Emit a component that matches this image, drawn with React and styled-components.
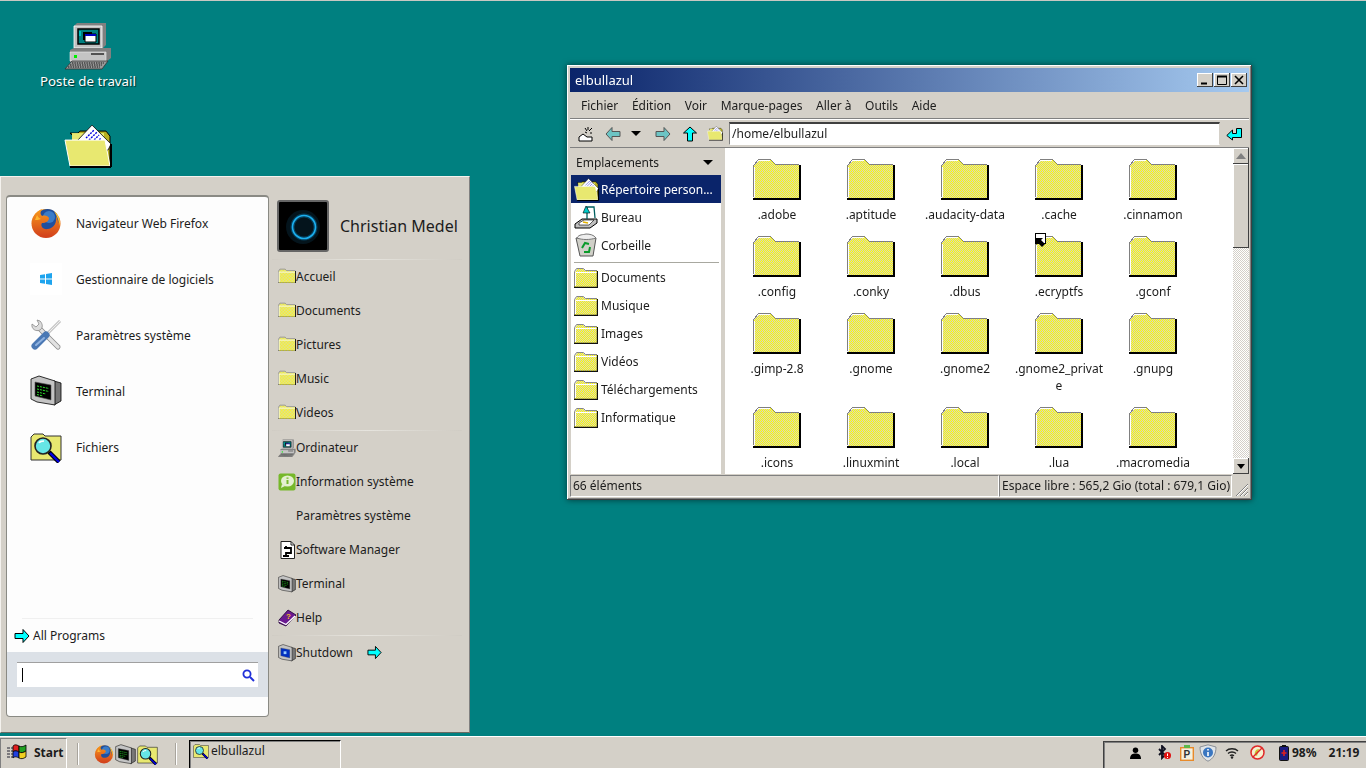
import React from 'react';
import styled, { createGlobalStyle } from 'styled-components';

const GlobalStyle = createGlobalStyle`
  html, body { margin: 0; padding: 0; height: 100%; overflow: hidden; }
  body { font-family: "Noto Sans", "DejaVu Sans", sans-serif; font-size: 12px; color: #1c1c1c; }
`;

const folders = [
  '.adobe', '.aptitude', '.audacity-data', '.cache', '.cinnamon',
  '.config', '.conky', '.dbus', '.ecryptfs', '.gconf',
  '.gimp-2.8', '.gnome', '.gnome2', '.gnome2_private', '.gnupg',
  '.icons', '.linuxmint', '.local', '.lua', '.macromedia',
];

const Patterns = () => (
  <HiddenSvg>
    <defs>
      <pattern id="dith" width="2" height="2" patternUnits="userSpaceOnUse">
        <rect width="2" height="2" fill="#ffff00" />
        <rect x="1" width="1" height="1" fill="#d4d0c8" />
        <rect y="1" width="1" height="1" fill="#d4d0c8" />
      </pattern>
      <linearGradient id="ffBody" x1="0" y1="0" x2="0" y2="1">
        <stop offset="0" stopColor="#f99b1c" />
        <stop offset="1" stopColor="#d2401c" />
      </linearGradient>
    </defs>
  </HiddenSvg>
);

const BigFolder = () => (
  <svg width="48" height="41" viewBox="0 0 48 41" shapeRendering="crispEdges">
    <path d="M1 39V6L5 2L6 1H17L22 6H47V39Z" fill="url(#dith)" />
    <path d="M.5 38V6.5L5.5 .5H17.5L22.5 5.5H46" stroke="#808080" fill="none" />
    <path d="M1.5 38V7.5M6 1.5H17" stroke="#fff" fill="none" />
    <path d="M0 39.5H48M47 6V40" stroke="#000" strokeWidth="2" fill="none" />
  </svg>
);

const SmallFolder = ({ size = 24 }) => (
  <svg width={size} height={size * 0.875} viewBox="0 0 24 21">
    <path d="M1 20V5L3 2H10L12 4H23V20Z" fill="url(#dith)" />
    <path d="M.5 20V4.5L2.5 1.5H9.5L11.5 3.5H23" stroke="#888" fill="none" />
    <path d="M1.5 19V5.5H23" stroke="#fff" fill="none" />
    <path d="M0 20.5H24M23.5 4V21" stroke="#111" strokeWidth="1.4" fill="none" />
  </svg>
);

const OpenFolder = ({ size = 48 }) => (
  <svg width={size} height={size * 0.92} viewBox="0 0 48 44">
    <path d="M6 9H14L16 7H42L46 12V42H40Z" fill="#b8b020" stroke="#000" />
    <path d="M8 9H40V20H8Z" fill="#e8e870" />
    <path d="M12 18L28 1L47 20L44 26H12Z" fill="#fff" stroke="#000" strokeWidth=".8" />
    <path d="M22 14L30 6M25 16L33 8M28 18L35 11M31 20L37 14" stroke="#0000e0" strokeWidth="1.4" strokeDasharray="2 1" />
    <path d="M1 16H41L46 42H6Z" fill="#e8e870" stroke="#fff" />
    <path d="M6 43H47M47 20V43" stroke="#000" strokeWidth="2" fill="none" />
  </svg>
);

const Computer = ({ size = 48 }) => (
  <svg width={size} height={size} viewBox="0 0 48 48">
    <path d="M10 4L13 1H42V23L38 27H10Z" fill="#808080" />
    <path d="M10 4H38V26H10Z" fill="#c0c0c0" stroke="#fff" strokeWidth=".8" />
    <path d="M14 7H35V22H14Z" fill="#008080" stroke="#000" strokeWidth="1.5" />
    <path d="M19 10H28V18H19Z" fill="#000" />
    <path d="M21 12H32V20H21Z" fill="#fff" stroke="#000" />
    <path d="M21 12H32V14H21Z" fill="#0000c0" />
    <path d="M16 9V14" stroke="#0ff" />
    <path d="M6 28L10 26H47V36L42 40H6Z" fill="#808080" />
    <path d="M6 30H42V39H6Z" fill="#c4c4c4" stroke="#eee" strokeWidth=".6" />
    <rect x="10" y="33" width="3" height="3" fill="#00f000" />
    <path d="M27 32H40" stroke="#222" strokeWidth="1.4" />
    <path d="M1 47L8 39H44L38 47Z" fill="#999" stroke="#333" strokeWidth=".8" />
    <path d="M8 41H40M6 43H38M4 45H36" stroke="#111" strokeWidth="1" strokeDasharray="1.4 1" />
  </svg>
);

const Firefox = ({ size = 32 }) => (
  <svg width={size} height={size} viewBox="0 0 32 32">
    <circle cx="16" cy="16.5" r="14.5" fill="url(#ffBody)" />
    <circle cx="17.5" cy="13" r="11" fill="#1f4f9e" />
    <circle cx="19" cy="10" r="6" fill="#3a7cc8" />
    <path d="M3 11C5 6 9 3 12 2C10 5 10 7 12 9C15 8 18 9 19 11C19 14 16 16 12 16C10 19 13 23 18 22C24 21 27 16 26 9C30 15 28 25 20 29C12 32 2 26 2 17Z" fill="url(#ffBody)" />
    <path d="M24 4C28 7 31 13 30 19C29 14 27 9 24 4Z" fill="#ffc42e" />
    <path d="M7 8C8 10 9 11 11 12C9 13 6 13 5 13Z" fill="#ffb52e" />
  </svg>
);

const WinTile = () => (
  <WinGlow>
    <svg width="12" height="12" viewBox="0 0 12 12">
      <path d="M0 2L5 1.2V5.6H0ZM6 1L12 0V5.6H6ZM0 6.4H5V10.8L0 10ZM6 6.4H12V12L6 11Z" fill="#1ea4ee" />
    </svg>
  </WinGlow>
);

const Tools = ({ size = 32 }) => (
  <svg width={size} height={size} viewBox="0 0 32 32">
    <path d="M9 9L28 28" stroke="#888" strokeWidth="5" strokeLinecap="round" />
    <path d="M9 9L28 28" stroke="#e2e2e2" strokeWidth="3.4" strokeLinecap="round" />
    <path d="M2 5C1 10 6 13 10 11C13 9 13 5 10 2L7 1L9 5L6 8L2 5Z" fill="#dcdcdc" stroke="#888" strokeWidth=".8" />
    <path d="M30 2L15 17" stroke="#aaa" strokeWidth="2.6" />
    <path d="M30 2L15 17" stroke="#eee" strokeWidth="1.2" />
    <path d="M16 16L5 27" stroke="#4a78b4" strokeWidth="7" strokeLinecap="round" />
    <path d="M14 19L6 26" stroke="#8fb2e0" strokeWidth="2" strokeLinecap="round" />
  </svg>
);

const Terminal = ({ size = 32, blue }) => (
  <svg width={size} height={size} viewBox="0 0 32 32">
    <path d="M24 6L31 8V26L24 30Z" fill="#777" stroke="#000" strokeWidth=".8" />
    <path d="M1 4L9 1L25 6V30L7 27L1 24Z" fill="#c4c4c4" stroke="#000" strokeWidth=".8" />
    <path d="M5 7L21 10V25L5 21Z" fill={blue ? '#0030c0' : '#000'} stroke="#555" strokeWidth=".6" />
    {blue
      ? <path d="M10 13H15V18H10Z" fill="#9cf" />
      : <path d="M7 11L19 13.5M7 14L19 16.5M7 17L16 19M7 19.5L13 21" stroke="#2fe02f" strokeDasharray="2 1" />}
  </svg>
);

const FileSearch = ({ size = 32 }) => (
  <svg width={size} height={size} viewBox="0 0 32 32">
    <path d="M1 29V6L4 3H13L15 5H31V29Z" fill="#e8e870" stroke="#333" />
    <circle cx="13" cy="15" r="8" fill="#66e6e6" stroke="#222" strokeWidth="1.6" />
    <path d="M9 12C10 10 12 10 14 10" stroke="#fff" strokeWidth="1.6" fill="none" />
    <path d="M19 21L29 31" stroke="#000" strokeWidth="4.4" />
    <path d="M20 22L29 31" stroke="#0000e0" strokeWidth="2.4" />
  </svg>
);

const Arrow = ({ size = 16, dir = 0, fill = '#00ffff', line = '#000' }) => (
  <svg width={size} height={size} viewBox="0 0 16 16" style={dir ? { transform: `rotate(${dir}deg)` } : undefined}>
    <path d="M1 5.5H9V1.5L15 8L9 14.5V10.5H1Z" fill={fill} stroke={line} />
  </svg>
);

const InfoBubble = () => (
  <svg width="18" height="18" viewBox="0 0 18 18">
    <rect x=".5" y=".5" width="17" height="17" rx="2" fill="#76b82a" />
    <ellipse cx="9.5" cy="8" rx="6.5" ry="5.5" fill="#e4f0d0" />
    <path d="M4 11L3 15L7 13Z" fill="#e4f0d0" />
    <path d="M9.5 7V11M9.5 4.5V5.8" stroke="#76b82a" strokeWidth="2" />
  </svg>
);

const Package = () => (
  <svg width="18" height="18" viewBox="0 0 18 18">
    <path d="M3 .5H13L16.5 4V17.5H3Z" fill="#fff" stroke="#222" />
    <path d="M13 .5V4H16.5" fill="none" stroke="#222" />
    <path d="M6 7H13V12H8V16M5 15H11M8 5V7" fill="none" stroke="#000" strokeWidth="1.8" />
  </svg>
);

const HelpBook = () => (
  <svg width="18" height="18" viewBox="0 0 18 18">
    <path d="M1 11L10 1L18 6L8 17L1 14Z" fill="#6a1a90" stroke="#200030" strokeWidth=".8" />
    <path d="M1 12L8 15.5L17 7" fill="none" stroke="#fff" strokeWidth="1.2" />
    <text x="8" y="10" fontSize="8" fontWeight="700" fill="#f0c020" fontFamily="Liberation Sans, sans-serif">?</text>
  </svg>
);

const Desk = () => (
  <svg width="24" height="24" viewBox="0 0 24 24">
    <path d="M1 19L8 14H23V18L16 23H1Z" fill="#c0c0c0" stroke="#000" />
    <path d="M5 18L10 15H20L15 20H5Z" fill="#fff" stroke="#000" strokeWidth=".6" />
    <path d="M9 17L14 18" stroke="#e0b000" strokeWidth="1.4" />
    <path d="M13 14V2H20L21 13" fill="none" stroke="#006060" strokeWidth="1.3" />
    <path d="M9 8L12 1L16 8Z" fill="#00c8c8" stroke="#000" strokeWidth=".6" />
  </svg>
);

const Bin = () => (
  <svg width="24" height="24" viewBox="0 0 24 24">
    <path d="M2 5L22 5L19 23H6Z" fill="#d0d0c8" stroke="#555" />
    <path d="M3 5C5 1 9 2 12 1C16 1 20 2 22 5C16 7 8 7 3 5Z" fill="#eee" stroke="#777" />
    <path d="M8 15L11 10L15 11M16 14L15 19H10M8 18" fill="none" stroke="#0a9a2a" strokeWidth="2" />
  </svg>
);

const Burst = () => (
  <svg width="16" height="16" viewBox="0 0 16 16">
    <path d="M1 15V11L5 8L9 11H14V15Z" fill="#fff" stroke="#000" />
    <path d="M10 1V4M7 2L9 5M14 2L11 5M14 7H12M7 6L9 7" stroke="#000" />
  </svg>
);

const EnterArrow = () => (
  <svg width="16" height="14" viewBox="0 0 16 14">
    <path d="M15.5 1.5H10.5V6.5H6.5V3L.8 8.5L6.5 13V10.5H15.5Z" fill="#00ffff" stroke="#000" />
  </svg>
);

const StartFlag = () => (
  <svg width="20" height="18" viewBox="0 0 20 18">
    <path d="M0 5H6M0 8H6M0 11H6M0 14H6" stroke="#223" strokeWidth="1" strokeDasharray="3 1" />
    <path d="M6 3C8 1 10 2 12 3V9C10 8 8 7 6 9Z" fill="#e02020" stroke="#000" strokeWidth=".8" />
    <path d="M12 3C14 4 16 4 19 2V8C16 10 14 10 12 9Z" fill="#20a020" stroke="#000" strokeWidth=".8" />
    <path d="M6 9C8 7 10 8 12 9V15C10 14 8 13 6 15Z" fill="#2040e0" stroke="#000" strokeWidth=".8" />
    <path d="M12 9C14 10 16 10 19 8V14C16 16 14 16 12 15Z" fill="#f0d020" stroke="#000" strokeWidth=".8" />
  </svg>
);

const TrayUser = () => (
  <svg width="11" height="12" viewBox="0 0 12 13">
    <circle cx="6" cy="3.5" r="3" fill="#000" />
    <path d="M0 13C0 8 3 7 6 7S12 8 12 13Z" fill="#000" />
  </svg>
);

const TrayBluetooth = () => (
  <svg width="14" height="15" viewBox="0 0 14 15">
    <path d="M1 4L7 10L4 13V1L7 4L1 10" fill="none" stroke="#101020" strokeWidth="1.8" />
    <circle cx="9.5" cy="10.5" r="3.5" fill="#e01010" />
    <path d="M9.5 8.5V11M9.5 12V13" stroke="#fff" />
  </svg>
);

const TrayClip = () => (
  <svg width="14" height="16" viewBox="0 0 14 16">
    <rect x=".7" y="2.7" width="12.6" height="12.6" fill="#f4f0e0" stroke="#e88a2a" strokeWidth="1.4" />
    <rect x="4" y="0" width="6" height="3" fill="#5cb84a" />
    <text x="3.5" y="13" fontSize="10" fontWeight="700" fill="#333" fontFamily="Liberation Sans, sans-serif">P</text>
  </svg>
);

const TrayShield = () => (
  <svg width="18" height="18" viewBox="0 0 18 18">
    <path d="M9 .8L17 3C17 10 14 15 9 17.2C4 15 1 10 1 3Z" fill="#e0e4e8" stroke="#8a8f96" />
    <circle cx="9" cy="8.5" r="5" fill="#3a76c0" />
    <path d="M9 8V12M9 5V6.5" stroke="#fff" strokeWidth="1.6" />
  </svg>
);

const TrayWifi = () => (
  <svg width="14" height="12" viewBox="0 0 14 12">
    <path d="M1 4C4 1 10 1 13 4M3 6.5C5 4.5 9 4.5 11 6.5M5 8.8C6 8 8 8 9 8.8" fill="none" stroke="#222" strokeWidth="1.3" />
    <circle cx="7" cy="10.5" r="1.2" fill="#222" />
  </svg>
);

const TrayNo = () => (
  <svg width="15" height="15" viewBox="0 0 15 15">
    <circle cx="7.5" cy="7.5" r="6.5" fill="#f6f0d0" stroke="#e02828" strokeWidth="1.5" />
    <path d="M5 10C4 7 6 4 9 4L7 11Z" fill="#c8c830" />
    <path d="M3 12L12 3" stroke="#e02828" strokeWidth="1.5" />
  </svg>
);

const TrayBattery = () => (
  <svg width="10" height="16" viewBox="0 0 10 16">
    <rect x="3" y="0" width="4" height="2" fill="#111" />
    <rect x=".5" y="1.5" width="9" height="14" rx="1" fill="#1c1c80" stroke="#111" />
    <path d="M5 5V11M2.5 8H7.5" stroke="#e02020" strokeWidth="1.6" />
  </svg>
);

const Desktop = () => {
  const mainApps = [
    { label: 'Navigateur Web Firefox', icon: <Firefox /> },
    { label: 'Gestionnaire de logiciels', icon: <WinTile /> },
    { label: 'Paramètres système', icon: <Tools /> },
    { label: 'Terminal', icon: <Terminal /> },
    { label: 'Fichiers', icon: <FileSearch /> },
  ];
  const places = ['Accueil', 'Documents', 'Pictures', 'Music', 'Videos'];
  const system = [
    { label: 'Ordinateur', icon: <Computer size={18} /> },
    { label: 'Information système', icon: <InfoBubble /> },
    { label: 'Paramètres système', icon: null },
    { label: 'Software Manager', icon: <Package /> },
    { label: 'Terminal', icon: <Terminal size={18} /> },
    { label: 'Help', icon: <HelpBook /> },
  ];
  const menus = ['Fichier', 'Édition', 'Voir', 'Marque-pages', 'Aller à', 'Outils', 'Aide'];
  const bookmarks = ['Documents', 'Musique', 'Images', 'Vidéos', 'Téléchargements', 'Informatique'];

  return (
    <Page>
      <GlobalStyle />
      <Patterns />
      <Wallpaper>
        <ComputerIcon>
          <Computer />
          <DesktopLabel>Poste de travail</DesktopLabel>
        </ComputerIcon>
        <HomeIcon>
          <OpenFolder />
        </HomeIcon>

        <StartMenu>
          <LeftPanel>
            {mainApps.map(app => (
              <AppRow key={app.label}>
                <AppIcon>{app.icon}</AppIcon>
                {app.label}
              </AppRow>
            ))}
            <Spacer />
            <LeftRule />
            <AllPrograms>
              <Arrow size={16} />
              All Programs
            </AllPrograms>
            <SearchBand>
              <SearchBox>
                <Caret />
                <svg width="13" height="13" viewBox="0 0 13 13">
                  <circle cx="5" cy="5" r="3.6" fill="none" stroke="#2030d8" strokeWidth="1.8" />
                  <path d="M8 8L12 12" stroke="#2030d8" strokeWidth="2" />
                </svg>
              </SearchBox>
            </SearchBand>
          </LeftPanel>
          <RightPanel>
            <UserHeader>
              <Avatar>
                <svg width="48" height="48" viewBox="0 0 48 48">
                  <circle cx="24" cy="25" r="17" fill="#04141c" />
                  <circle cx="25" cy="25" r="11.5" fill="none" stroke="#0a8fd0" strokeWidth="4" opacity=".35" />
                  <circle cx="25" cy="25" r="11.5" fill="none" stroke="#1cb0f0" strokeWidth="1.6" />
                </svg>
              </Avatar>
              <UserName>Christian Medel</UserName>
            </UserHeader>
            <RightRule />
            {places.map(place => (
              <PlaceRow key={place}>
                <PlaceIcon><SmallFolder size={18} /></PlaceIcon>
                {place}
              </PlaceRow>
            ))}
            <RightRule />
            {system.map(item => (
              <PlaceRow key={item.label}>
                <PlaceIcon>{item.icon}</PlaceIcon>
                {item.label}
              </PlaceRow>
            ))}
            <RightRule />
            <PlaceRow>
              <PlaceIcon><Terminal size={18} blue /></PlaceIcon>
              Shutdown
              <ShutdownArrow><Arrow size={15} /></ShutdownArrow>
            </PlaceRow>
          </RightPanel>
        </StartMenu>

        <Window>
          <TitleBar>
            <TitleText>elbullazul</TitleText>
            <TitleButtons>
              <TitleButton>
                <svg width="10" height="10" viewBox="0 0 10 10"><path d="M1 8.5H7" stroke="#000" strokeWidth="2" /></svg>
              </TitleButton>
              <TitleButton>
                <svg width="10" height="10" viewBox="0 0 10 10"><path d="M.5 1.5H9.5V9.5H.5Z" fill="none" stroke="#000" /><path d="M0 1.5H10" stroke="#000" strokeWidth="2" /></svg>
              </TitleButton>
              <TitleButton>
                <svg width="10" height="10" viewBox="0 0 10 10"><path d="M1 1L9 9M9 1L1 9" stroke="#000" strokeWidth="1.6" /></svg>
              </TitleButton>
            </TitleButtons>
          </TitleBar>
          <MenuBar>
            {menus.map(menu => <MenuItem key={menu}>{menu}</MenuItem>)}
          </MenuBar>
          <ToolBar>
            <ToolIcon><Burst /></ToolIcon>
            <ToolIcon><Arrow dir={180} fill="#6cc4c4" line="#555" /></ToolIcon>
            <DropArrow />
            <ToolIcon><Arrow fill="#6cc4c4" line="#555" /></ToolIcon>
            <ToolIcon><Arrow dir={-90} /></ToolIcon>
            <ToolIcon $back><OpenFolder size={18} /></ToolIcon>
            <PathEntry>/home/elbullazul</PathEntry>
            <EnterSlot><EnterArrow /></EnterSlot>
          </ToolBar>
          <Body>
            <Sidebar>
              <SidebarHead>
                Emplacements
                <HeadArrow />
              </SidebarHead>
              <SidebarList>
                <SidebarRow $active>
                  <RowIcon><OpenFolder size={25} /></RowIcon>
                  Répertoire person...
                </SidebarRow>
                <SidebarRow>
                  <RowIcon><Desk /></RowIcon>
                  Bureau
                </SidebarRow>
                <SidebarRow>
                  <RowIcon><Bin /></RowIcon>
                  Corbeille
                </SidebarRow>
                <SidebarRule />
                {bookmarks.map(mark => (
                  <SidebarRow key={mark}>
                    <RowIcon><SmallFolder /></RowIcon>
                    {mark}
                  </SidebarRow>
                ))}
              </SidebarList>
            </Sidebar>
            <Content>
              <FolderGrid>
                {folders.map(name => (
                  <FolderCell key={name}>
                    <FolderArt>
                      <BigFolder />
                      {name === '.ecryptfs' && (
                        <LinkBadge>
                          <svg width="9" height="9" viewBox="0 0 9 9">
                            <path d="M0 0H7L5 2L9 6L6 9L2 5L0 7Z" fill="#000" />
                          </svg>
                        </LinkBadge>
                      )}
                    </FolderArt>
                    <FolderName>{name}</FolderName>
                  </FolderCell>
                ))}
              </FolderGrid>
            </Content>
            <ScrollBar>
              <ScrollButton>
                <svg width="10" height="6" viewBox="0 0 10 6"><path d="M5 0L10 6H0Z" fill="#808080" /></svg>
              </ScrollButton>
              <ScrollThumb />
              <ScrollTrack />
              <ScrollButton>
                <svg width="8" height="5" viewBox="0 0 8 5"><path d="M0 0H8L4 5Z" fill="#000" /></svg>
              </ScrollButton>
            </ScrollBar>
          </Body>
          <StatusBar>
            <StatusLeft>66 éléments</StatusLeft>
            <StatusRight>Espace libre : 565,2 Gio (total : 679,1 Gio)</StatusRight>
            <Grip>
              <svg width="16" height="16" viewBox="0 0 16 16">
                <path d="M15 3L3 15M15 7L7 15M15 11L11 15" stroke="#808080" />
                <path d="M15 4L4 15M15 8L8 15M15 12L12 15" stroke="#fff" />
              </svg>
            </Grip>
          </StatusBar>
        </Window>
      </Wallpaper>

      <TaskBar>
        <StartButton>
          <StartFlag />
          Start
        </StartButton>
        <BarDivider />
        <QuickLaunch>
          <Firefox size={20} />
          <Terminal size={21} />
          <FileSearch size={21} />
        </QuickLaunch>
        <BarDivider />
        <TaskButton>
          <FileSearch size={16} />
          elbullazul
        </TaskButton>
        <Tray>
          <TraySlot $ml={26}><TrayUser /></TraySlot>
          <TraySlot $ml={17}><TrayBluetooth /></TraySlot>
          <TraySlot $ml={8}><TrayClip /></TraySlot>
          <TraySlot $ml={5}><TrayShield /></TraySlot>
          <TraySlot $ml={8}><TrayWifi /></TraySlot>
          <TraySlot $ml={11}><TrayNo /></TraySlot>
          <TraySlot $ml={14}><TrayBattery /></TraySlot>
          <TrayText>98%</TrayText>
          <TrayClock>21:19</TrayClock>
        </Tray>
      </TaskBar>
    </Page>
  );
};

export default Desktop;

const raised = `
  box-shadow: inset -1px -1px #404040, inset 1px 1px #fff, inset -2px -2px #808080, inset 2px 2px #d4d0c8;
`;

const HiddenSvg = styled.svg`
  position: absolute;
  width: 0;
  height: 0;
`;

const Page = styled.div`
  width: 1366px;
  height: 768px;
  display: flex;
  flex-direction: column;
  overflow: hidden;
`;

const Wallpaper = styled.div`
  position: relative;
  flex: 1;
  background: #008080;
  border-top: 1px solid #c8c8c2;
`;

const ComputerIcon = styled.div`
  position: absolute;
  left: 28px;
  top: 21px;
  width: 120px;
  display: flex;
  flex-direction: column;
  align-items: center;
`;

const DesktopLabel = styled.div`
  margin-top: 2px;
  color: #fff;
  font-size: 13.3px;
  line-height: 18px;
  text-shadow: 1px 1px 1px #003030;
`;

const HomeIcon = styled.div`
  position: absolute;
  left: 64px;
  top: 123px;
`;

const WinGlow = styled.div`
  width: 32px;
  height: 32px;
  display: flex;
  align-items: center;
  justify-content: center;
  background: #fff;
`;

const StartMenu = styled.div`
  position: absolute;
  left: 0;
  top: 175px;
  width: 470px;
  height: 557px;
  box-sizing: border-box;
  padding: 18px 0 15px 5px;
  display: flex;
  background: #d4d0c8;
  border-top: 1px solid #f4f2ee;
  border-left: 1px solid #f4f2ee;
  border-right: 1px solid #808080;
  border-bottom: 1px solid #6a6a62;
`;

const LeftPanel = styled.div`
  width: 263px;
  flex: none;
  box-sizing: border-box;
  display: flex;
  flex-direction: column;
  background: #fdfdfd;
  border: 1px solid #8a8a84;
  border-top-width: 2px;
  border-radius: 4px;
  padding-bottom: 19px;
`;

const AppRow = styled.div`
  height: 56px;
  flex: none;
  display: flex;
  align-items: center;
  gap: 14px;
  padding-left: 23px;
  padding-bottom: 4px;
  box-sizing: border-box;
  font-size: 12px;
`;

const AppIcon = styled.div`
  width: 32px;
  height: 32px;
`;

const Spacer = styled.div`
  flex: 1;
`;

const LeftRule = styled.div`
  height: 1px;
  margin: 0 15px;
  background: #f0f0f0;
`;

const AllPrograms = styled.div`
  height: 33px;
  display: flex;
  align-items: center;
  gap: 3px;
  padding-left: 7px;
  font-size: 12px;
`;

const SearchBand = styled.div`
  height: 45px;
  box-sizing: border-box;
  padding: 10px 10px;
  background: #dce1e7;
`;

const SearchBox = styled.div`
  height: 25px;
  box-sizing: border-box;
  display: flex;
  align-items: center;
  justify-content: space-between;
  padding: 0 3px 0 5px;
  background: #fff;
  border-top: 1px solid #a0a0a0;
`;

const Caret = styled.div`
  width: 1px;
  height: 14px;
  background: #000;
`;

const RightPanel = styled.div`
  flex: 1;
  display: flex;
  flex-direction: column;
  padding: 5px 7px 0 3px;
`;

const UserHeader = styled.div`
  height: 59px;
  flex: none;
  display: flex;
  padding-left: 5px;
  gap: 11px;
`;

const Avatar = styled.div`
  width: 52px;
  height: 52px;
  box-sizing: border-box;
  display: flex;
  align-items: center;
  justify-content: center;
  background: #000;
  border: 2px solid #666;
  border-radius: 3px;
`;

const UserName = styled.div`
  height: 52px;
  line-height: 52px;
  font-size: 16px;
`;

const RightRule = styled.div`
  height: 1px;
  flex: none;
  background: linear-gradient(90deg, #d0ccc4, #e6e4de 50%, #d0ccc4);
`;

const PlaceRow = styled.div`
  height: 34px;
  flex: none;
  box-sizing: border-box;
  display: flex;
  align-items: center;
  padding-left: 6px;
  padding-bottom: 1px;
  font-size: 12px;
`;

const PlaceIcon = styled.div`
  width: 18px;
  height: 18px;
  flex: none;
`;

const ShutdownArrow = styled.div`
  margin-left: 14px;
  height: 15px;
`;

const Window = styled.div`
  position: absolute;
  left: 567px;
  top: 64px;
  width: 685px;
  height: 435px;
  box-sizing: border-box;
  padding: 3px;
  display: flex;
  flex-direction: column;
  background: #d4d0c8;
  ${raised}
  filter: drop-shadow(0 0 3px rgba(0, 0, 0, 0.55));
`;

const TitleBar = styled.div`
  height: 24px;
  flex: none;
  display: flex;
  align-items: center;
  justify-content: space-between;
  padding: 0 2px 0 5px;
  background: linear-gradient(90deg, #0a246a, #a6caf0);
`;

const TitleText = styled.div`
  color: #fff;
  font-size: 13px;
`;

const TitleButtons = styled.div`
  display: flex;
`;

const TitleButton = styled.div`
  width: 16px;
  height: 14px;
  margin-left: 1px;
  display: flex;
  align-items: center;
  justify-content: center;
  background: #d4d0c8;
  box-shadow: inset -1px -1px #404040, inset 1px 1px #fff;
`;

const MenuBar = styled.div`
  height: 26px;
  margin-top: 1px;
  flex: none;
  display: flex;
  align-items: center;
  padding-left: 4.2px;
  border-bottom: 1px solid #808080;
  box-sizing: border-box;
`;

const MenuItem = styled.div`
  padding: 0 6.8px;
  font-size: 12px;
`;

const ToolBar = styled.div`
  height: 29px;
  flex: none;
  box-sizing: border-box;
  display: flex;
  align-items: center;
  padding-left: 8px;
  border-top: 1px solid #fff;
  border-bottom: 1px solid #808080;
`;

const ToolIcon = styled.div`
  width: 16px;
  height: 16px;
  margin-right: 11px;
  margin-left: ${p => (p.$back ? '-2px' : '0')};
  display: flex;
  align-items: center;
  justify-content: center;
`;

const DropArrow = styled.div`
  width: 0;
  height: 0;
  margin: 0 14px 0 -1px;
  border-left: 5px solid transparent;
  border-right: 5px solid transparent;
  border-top: 5px solid #000;
`;

const PathEntry = styled.div`
  width: 491px;
  height: 23px;
  margin-left: -5px;
  box-sizing: border-box;
  padding-left: 2px;
  line-height: 20px;
  font-size: 12px;
  background: #fff;
  border-top: 2px solid #404040;
  border-left: 1px solid #808080;
  border-right: 1px solid #d4d0c8;
  border-bottom: 1px solid #fff;
`;

const EnterSlot = styled.div`
  margin-left: 6px;
  height: 14px;
`;

const Body = styled.div`
  flex: 1;
  min-height: 0;
  display: flex;
`;

const Sidebar = styled.div`
  width: 151px;
  flex: none;
  margin-right: 4px;
  box-sizing: border-box;
  padding-left: 1px;
  display: flex;
  flex-direction: column;
`;

const SidebarHead = styled.div`
  height: 27px;
  flex: none;
  box-sizing: border-box;
  display: flex;
  align-items: center;
  justify-content: space-between;
  padding: 2px 8px 0 5px;
  font-size: 12px;
`;

const HeadArrow = styled.div`
  width: 0;
  height: 0;
  border-left: 5px solid transparent;
  border-right: 5px solid transparent;
  border-top: 5px solid #000;
`;

const SidebarList = styled.div`
  flex: 1;
  background: #fff;
`;

const SidebarRow = styled.div`
  height: 28px;
  display: flex;
  align-items: center;
  gap: 2px;
  padding-left: 3px;
  font-size: 12px;
  background: ${p => (p.$active ? '#0a246a' : 'transparent')};
  color: ${p => (p.$active ? '#fff' : '#1c1c1c')};
`;

const RowIcon = styled.div`
  width: 25px;
  height: 24px;
  flex: none;
  display: flex;
  align-items: center;
`;

const SidebarRule = styled.div`
  height: 1px;
  margin: 3px 2px 0 3px;
  background: #a8a8a0;
`;

const Content = styled.div`
  flex: 1;
  min-width: 0;
  overflow: hidden;
  background: #fff;
  padding: 11px 0 0 5px;
  box-sizing: border-box;
`;

const FolderGrid = styled.div`
  display: grid;
  grid-template-columns: repeat(5, 94px);
  row-gap: 13px;
`;

const FolderCell = styled.div`
  display: flex;
  flex-direction: column;
  align-items: center;
`;

const FolderArt = styled.div`
  position: relative;
  width: 48px;
  height: 41px;
  margin-bottom: 6px;
`;

const LinkBadge = styled.div`
  position: absolute;
  left: 0;
  top: -3px;
  width: 9px;
  height: 9px;
  background: #fff;
  border: 1px solid #000;
`;

const FolderName = styled.div`
  width: 90px;
  text-align: center;
  font-size: 12px;
  line-height: 17px;
  word-break: break-all;
`;

const ScrollBar = styled.div`
  width: 16px;
  flex: none;
  display: flex;
  flex-direction: column;
`;

const ScrollButton = styled.div`
  height: 16px;
  flex: none;
  display: flex;
  align-items: center;
  justify-content: center;
  background: #d4d0c8;
  box-shadow: inset -1px -1px #404040, inset 1px 1px #fff;
`;

const ScrollThumb = styled.div`
  height: 84px;
  flex: none;
  background: #d4d0c8;
  box-shadow: inset -1px -1px #404040, inset 1px 1px #fff;
`;

const ScrollTrack = styled.div`
  flex: 1;
  background: repeating-conic-gradient(#d4d0c8 0 25%, #fff 0 50%) 0 0 / 2px 2px;
`;

const StatusBar = styled.div`
  height: 22px;
  flex: none;
  display: flex;
  margin-top: 1px;
  font-size: 12px;
`;

const sunken = `
  box-sizing: border-box;
  padding-left: 2px;
  line-height: 19px;
  border-top: 1px solid #808080;
  border-left: 1px solid #808080;
  border-right: 1px solid #fff;
  border-bottom: 1px solid #fff;
  white-space: nowrap;
`;

const StatusLeft = styled.div`
  ${sunken}
  width: 429px;
  flex: none;
`;

const StatusRight = styled.div`
  ${sunken}
  width: 233px;
  flex: none;
`;

const Grip = styled.div`
  flex: 1;
  display: flex;
  align-items: flex-end;
  justify-content: flex-end;
`;

const TaskBar = styled.div`
  height: 32px;
  flex: none;
  box-sizing: border-box;
  display: flex;
  align-items: flex-end;
  background: #d4d0c8;
  border-top: 1px solid #fff;
`;

const StartButton = styled.div`
  width: 67px;
  height: 30px;
  flex: none;
  box-sizing: border-box;
  display: flex;
  align-items: center;
  gap: 7px;
  padding: 0 0 3px 6px;
  font-weight: 700;
  font-size: 12px;
  border-top: 1px solid #808080;
  border-right: 1px solid #fff;
  border-left: 1px solid #808080;
`;

const BarDivider = styled.div`
  width: 2px;
  height: 22px;
  flex: none;
  margin: 0 0 3px 10px;
  background: #a8a49c;
  border-right: 1px solid #fff;
  box-sizing: border-box;
`;

const QuickLaunch = styled.div`
  width: 86px;
  flex: none;
  height: 28px;
  display: flex;
  align-items: center;
  gap: 1px;
  padding-left: 15px;
  box-sizing: border-box;
`;

const TaskButton = styled.div`
  width: 152px;
  height: 28px;
  flex: none;
  margin-left: 12px;
  box-sizing: border-box;
  display: flex;
  align-items: flex-start;
  gap: 2px;
  padding: 2px 0 0 3px;
  font-size: 12px;
  line-height: 16px;
  border-top: 1px solid #000;
  border-left: 1px solid #000;
  border-right: 1px solid #fff;
  box-shadow: inset 1px 1px #808080;
`;

const Tray = styled.div`
  margin-left: auto;
  width: 263px;
  height: 27px;
  box-sizing: border-box;
  display: flex;
  align-items: center;
  padding-bottom: 5px;
  border-top: 1px solid #404040;
  border-left: 1px solid #404040;
  box-shadow: inset 1px 1px #808080;
`;

const TraySlot = styled.div`
  flex: none;
  display: flex;
  margin-left: ${p => p.$ml}px;
`;

const TrayText = styled.div`
  font-weight: 700;
  font-size: 12px;
  margin-left: 3px;
`;

const TrayClock = styled.div`
  font-weight: 700;
  font-size: 12px;
  margin-left: 12px;
`;
